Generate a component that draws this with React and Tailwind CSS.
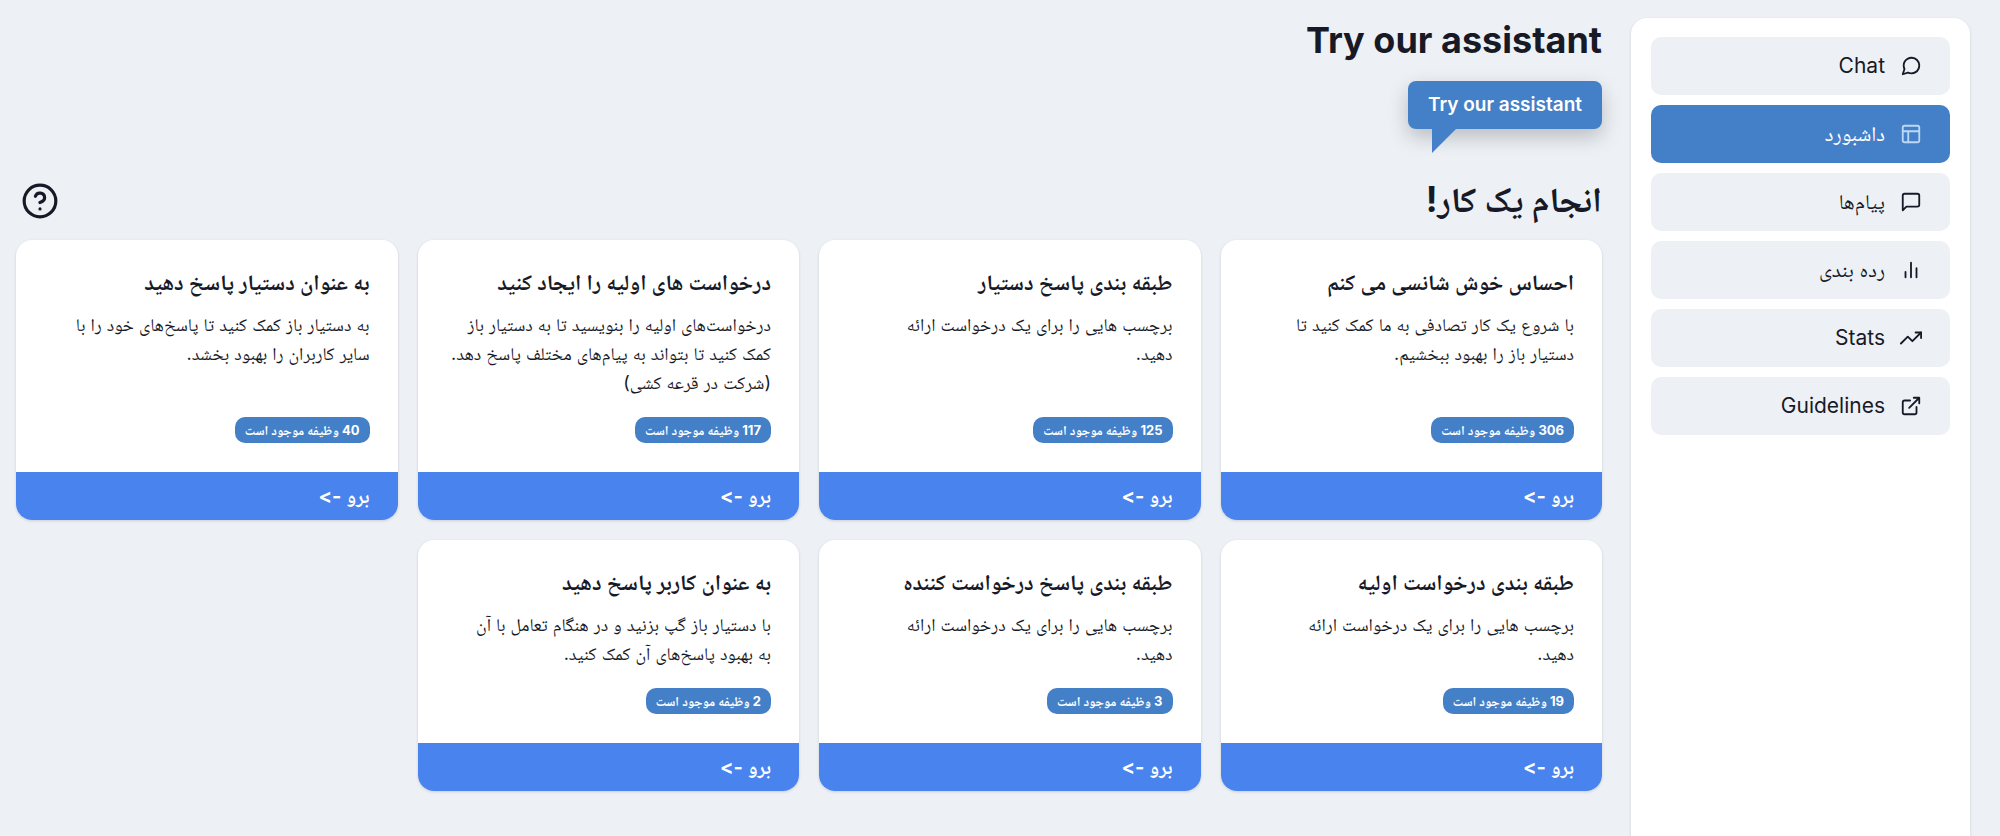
import React from 'react'
import clsx from 'clsx'

const NAV_ITEMS = [
  { label: 'Chat',      icon: ChatIcon },
  { label: 'داشبورد',   icon: LayoutIcon, active: true },
  { label: 'پیام‌ها',    icon: MessageIcon },
  { label: 'رده بندی',  icon: BarsIcon },
  { label: 'Stats',     icon: TrendIcon },
  { label: 'Guidelines', icon: ExternalIcon },
]

const TASKS = [
  { title: 'احساس خوش شانسی می کنم', count: 306, desc: 'با شروع یک کار تصادفی به ما کمک کنید تا\nدستیار باز را بهبود ببخشیم.' },
  { title: 'طبقه بندی پاسخ دستیار', count: 125, desc: 'برچسب هایی را برای یک درخواست ارائه\nدهید.' },
  { title: 'درخواست های اولیه را ایجاد کنید', count: 117, desc: 'درخواست‌های اولیه را بنویسید تا به دستیار باز\nکمک کنید تا بتواند به پیام‌های مختلف پاسخ دهد.\n(شرکت در قرعه کشی)' },
  { title: 'به عنوان دستیار پاسخ دهید', count: 40, desc: 'به دستیار باز کمک کنید تا پاسخ‌های خود را با\nسایر کاربران را بهبود بخشد.' },
  { title: 'طبقه بندی درخواست اولیه', count: 19, desc: 'برچسب هایی را برای یک درخواست ارائه\nدهید.' },
  { title: 'طبقه بندی پاسخ درخواست کننده', count: 3, desc: 'برچسب هایی را برای یک درخواست ارائه\nدهید.' },
  { title: 'به عنوان کاربر پاسخ دهید', count: 2, desc: 'با دستیار باز گپ بزنید و در هنگام تعامل با آن\nبه بهبود پاسخ‌های آن کمک کنید.' },
]

function Icon({ className, children }) {
  return (
    <svg viewBox="0 0 24 24" fill="none" stroke="currentColor" strokeWidth="2" strokeLinecap="round" strokeLinejoin="round" aria-hidden="true" className={className}>
      {children}
    </svg>
  )
}

function ChatIcon({ className }) {
  return <Icon className={className}><path d="M21 11.5a8.38 8.38 0 0 1-.9 3.8 8.5 8.5 0 0 1-7.6 4.7 8.38 8.38 0 0 1-3.8-.9L3 21l1.9-5.7a8.38 8.38 0 0 1-.9-3.8 8.5 8.5 0 0 1 4.7-7.6 8.38 8.38 0 0 1 3.8-.9h.5a8.48 8.48 0 0 1 8 8v.5z" /></Icon>
}

function LayoutIcon({ className }) {
  return <Icon className={className}><rect x="3" y="3" width="18" height="18" rx="2" /><path d="M3 9h18M9 21V9" /></Icon>
}

function MessageIcon({ className }) {
  return <Icon className={className}><path d="M21 15a2 2 0 0 1-2 2H7l-4 4V5a2 2 0 0 1 2-2h14a2 2 0 0 1 2 2z" /></Icon>
}

function BarsIcon({ className }) {
  return <Icon className={className}><path d="M18 20V10M12 20V4M6 20v-6" /></Icon>
}

function TrendIcon({ className }) {
  return <Icon className={className}><path d="M23 6l-9.5 9.5-5-5L1 18" /><path d="M17 6h6v6" /></Icon>
}

function ExternalIcon({ className }) {
  return <Icon className={className}><path d="M18 13v6a2 2 0 0 1-2 2H5a2 2 0 0 1-2-2V8a2 2 0 0 1 2-2h6" /><path d="M15 3h6v6M10 14L21 3" /></Icon>
}

function HelpIcon({ className }) {
  return <Icon className={className}><circle cx="12" cy="12" r="10" /><path d="M9.09 9a3 3 0 0 1 5.83 1c0 2-3 3-3 3M12 17h.01" /></Icon>
}

function NavLink({ label, icon: ItemIcon, active }) {
  return (
    <a
      href="#"
      aria-current={active ? 'page' : undefined}
      className={clsx('flex h-[58px] items-center gap-[15px] rounded-[10px] px-7', active ? 'bg-[#4480c8] text-white' : 'bg-[#edf1f6]')}
    >
      <ItemIcon className={clsx('size-[22px] shrink-0', active && 'text-[#bcd8f5]')} />
      <span className="text-[21px] leading-7">{label}</span>
    </a>
  )
}

function TaskCard({ title, desc, count }) {
  return (
    <a href="#" className="flex flex-col overflow-hidden rounded-2xl bg-white shadow-[0_1px_3px_rgba(0,0,0,0.14)]">
      <div className="flex grow flex-col items-start px-7 pt-7 pb-[29px]">
        <h3 className="text-[22px] leading-7 font-bold">{title}</h3>
        <p className="mt-[14px] mb-5 text-lg leading-[29px] whitespace-pre-line">{desc}</p>
        <span className="mt-auto rounded-[10px] bg-[#4480c8] px-[10px] text-[13px] leading-[26px] font-bold text-white">
          {count} وظیفه موجود است
        </span>
      </div>
      <div className="bg-[#4983ee] px-7 text-xl leading-[48px] font-bold text-white">برو -&gt;</div>
    </a>
  )
}

export default function App() {
  return (
    <div dir="rtl" className="flex min-h-screen gap-[29px] bg-[#edf1f6] pt-[18px] pr-[30px] pl-4 font-['Inter','Noto_Naskh_Arabic','Noto_Sans_Arabic','DejaVu_Sans',sans-serif] text-[#171a26]">
      <nav className="flex w-[339px] shrink-0 flex-col gap-[10px] rounded-t-2xl bg-white px-5 pt-[19px] shadow-[0_1px_3px_rgba(0,0,0,0.14)]">
        {NAV_ITEMS.map(item => <NavLink key={item.label} {...item} />)}
      </nav>

      <main className="min-w-0 flex-1 pb-11">
        <h1 className="text-4xl leading-[44px] font-bold">Try our assistant</h1>

        {/* Speech bubble button */}
        <button type="button" className="relative mt-[19px] block h-12 rounded-lg bg-[#4480c8] px-5 text-[19px] font-semibold text-white shadow-[0_8px_20px_rgba(0,0,0,0.22)]">
          Try our assistant
          <svg viewBox="0 0 24 24" aria-hidden="true" className="absolute top-full left-6 size-6">
            <path d="M0 0H24L0 24Z" fill="#4480c8" />
          </svg>
        </button>

        <div className="mt-12 mb-[15px] flex h-12 items-center justify-between">
          <h2 className="pb-1 text-[35px] leading-10 font-bold">انجام یک کار!</h2>
          <button type="button" aria-label="راهنما" className="ml-[5px]">
            <HelpIcon className="size-[38px]" />
          </button>
        </div>

        <div className="grid grid-cols-4 gap-5">
          {TASKS.map(task => <TaskCard key={task.title} {...task} />)}
        </div>
      </main>
    </div>
  )
}
